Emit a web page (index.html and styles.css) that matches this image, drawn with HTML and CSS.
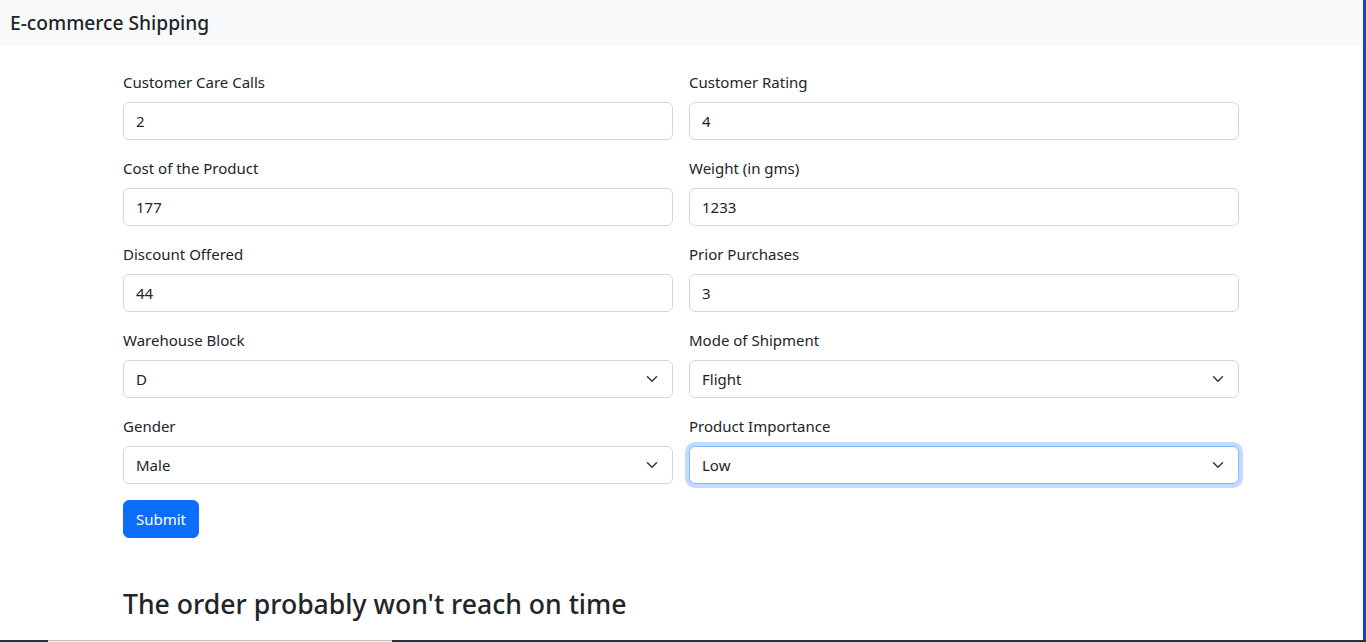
FILE: index.html
```html
<!DOCTYPE html>
<html lang="en">
<head>
<meta charset="utf-8">
<title>E-commerce Shipping</title>
<link rel="stylesheet" href="styles.css">
</head>
<body>
<div class="page">
  <nav class="navbar">
    <span class="brand">E-commerce Shipping</span>
  </nav>
  <main class="container">
    <form class="form-grid">
      <div class="field">
        <label class="label" for="calls">Customer Care Calls</label>
        <input class="control" id="calls" type="text" value="2">
      </div>
      <div class="field">
        <label class="label" for="rating">Customer Rating</label>
        <input class="control" id="rating" type="text" value="4">
      </div>
      <div class="field">
        <label class="label" for="cost">Cost of the Product</label>
        <input class="control" id="cost" type="text" value="177">
      </div>
      <div class="field">
        <label class="label" for="weight">Weight (in gms)</label>
        <input class="control" id="weight" type="text" value="1233">
      </div>
      <div class="field">
        <label class="label" for="discount">Discount Offered</label>
        <input class="control" id="discount" type="text" value="44">
      </div>
      <div class="field">
        <label class="label" for="prior">Prior Purchases</label>
        <input class="control" id="prior" type="text" value="3">
      </div>
      <div class="field">
        <label class="label" for="block">Warehouse Block</label>
        <select class="control select" id="block">
          <option>A</option><option>B</option><option>C</option><option selected>D</option><option>F</option>
        </select>
      </div>
      <div class="field">
        <label class="label" for="mode">Mode of Shipment</label>
        <select class="control select" id="mode">
          <option selected>Flight</option><option>Road</option><option>Ship</option>
        </select>
      </div>
      <div class="field">
        <label class="label" for="gender">Gender</label>
        <select class="control select" id="gender">
          <option selected>Male</option><option>Female</option>
        </select>
      </div>
      <div class="field">
        <label class="label" for="importance">Product Importance</label>
        <select class="control select focused" id="importance">
          <option selected>Low</option><option>Medium</option><option>High</option>
        </select>
      </div>
      <div class="actions">
        <button class="btn" type="button">Submit</button>
      </div>
    </form>
    <h3 class="result">The order probably won't reach on time</h3>
  </main>
</div>
<div class="edge-right"></div>
<div class="taskbar">
  <span class="tb-dark tb-start"></span>
  <span class="tb-light"></span>
  <span class="tb-dark tb-rest"></span>
</div>
</body>
</html>
```

FILE: styles.css
```css
* { box-sizing: border-box; }

html, body {
  margin: 0;
  padding: 0;
  background: #fff;
  overflow: hidden;
}

body {
  font-family: "Noto Sans", "Open Sans", sans-serif;
  font-size: 15px;
  line-height: 24px;
  color: #212529;
}

.page {
  margin-right: 3px;
  height: 642px;
}

.navbar {
  background: #f8f9fa;
  height: 46px;
  display: flex;
  align-items: center;
  padding: 0 10px;
}

.brand {
  font-size: 19.2px;
  line-height: 30px;
  font-weight: 500;
  color: #212529;
}

.container {
  width: 1116px;
  margin-top: 24px;
  margin-left: max(0px, calc((100% - 1117px) / 2));
}

.form-grid {
  display: grid;
  grid-template-columns: 1fr 1fr;
  column-gap: 16px;
  row-gap: 16px;
}

.field {
  display: flex;
  flex-direction: column;
}

.label {
  display: block;
  margin-bottom: 8px;
  line-height: 24px;
}

.control {
  display: block;
  width: 100%;
  height: 38px;
  padding: 6px 12px;
  font: inherit;
  font-size: 15px;
  line-height: 24px;
  color: #212529;
  background-color: #fff;
  border: 1px solid #d3d7dc;
  border-radius: 6px;
  outline: none;
  -webkit-appearance: none;
  appearance: none;
}

.select {
  padding-right: 36px;
  background-image: url("data:image/svg+xml,%3csvg xmlns='http://www.w3.org/2000/svg' viewBox='0 0 16 16'%3e%3cpath fill='none' stroke='%23343a40' stroke-linecap='round' stroke-linejoin='round' stroke-width='2' d='m2 5 6 6 6-6'/%3e%3c/svg%3e");
  background-repeat: no-repeat;
  background-position: right 12px center;
  background-size: 16px 12px;
}

.focused {
  border-color: #86b7fe;
  box-shadow: 0 0 0 4px rgba(13, 110, 253, 0.25);
}

.actions {
  grid-column: 1 / -1;
}

.btn {
  display: inline-block;
  height: 38px;
  width: 76px;
  padding: 6px 0;
  font: inherit;
  font-size: 15px;
  line-height: 24px;
  text-align: center;
  color: #fff;
  background: #0d6efd;
  border: 1px solid #0d6efd;
  border-radius: 6px;
  cursor: pointer;
}

.result {
  margin: 50px 0 0;
  font-size: 26.6px;
  font-weight: 500;
  line-height: 33.6px;
}

.edge-right {
  position: fixed;
  top: 0;
  right: 0;
  width: 3px;
  height: 640px;
  background: #1448b4;
}

.taskbar {
  position: fixed;
  left: 0;
  right: 0;
  bottom: 0;
  height: 2px;
  display: flex;
}

.tb-dark { background: #1f3640; }
.tb-start { width: 48px; }
.tb-light { width: 344px; background: linear-gradient(#c4c4c4 50%, #ececec 50%); }
.tb-rest { flex: 1; }
```
